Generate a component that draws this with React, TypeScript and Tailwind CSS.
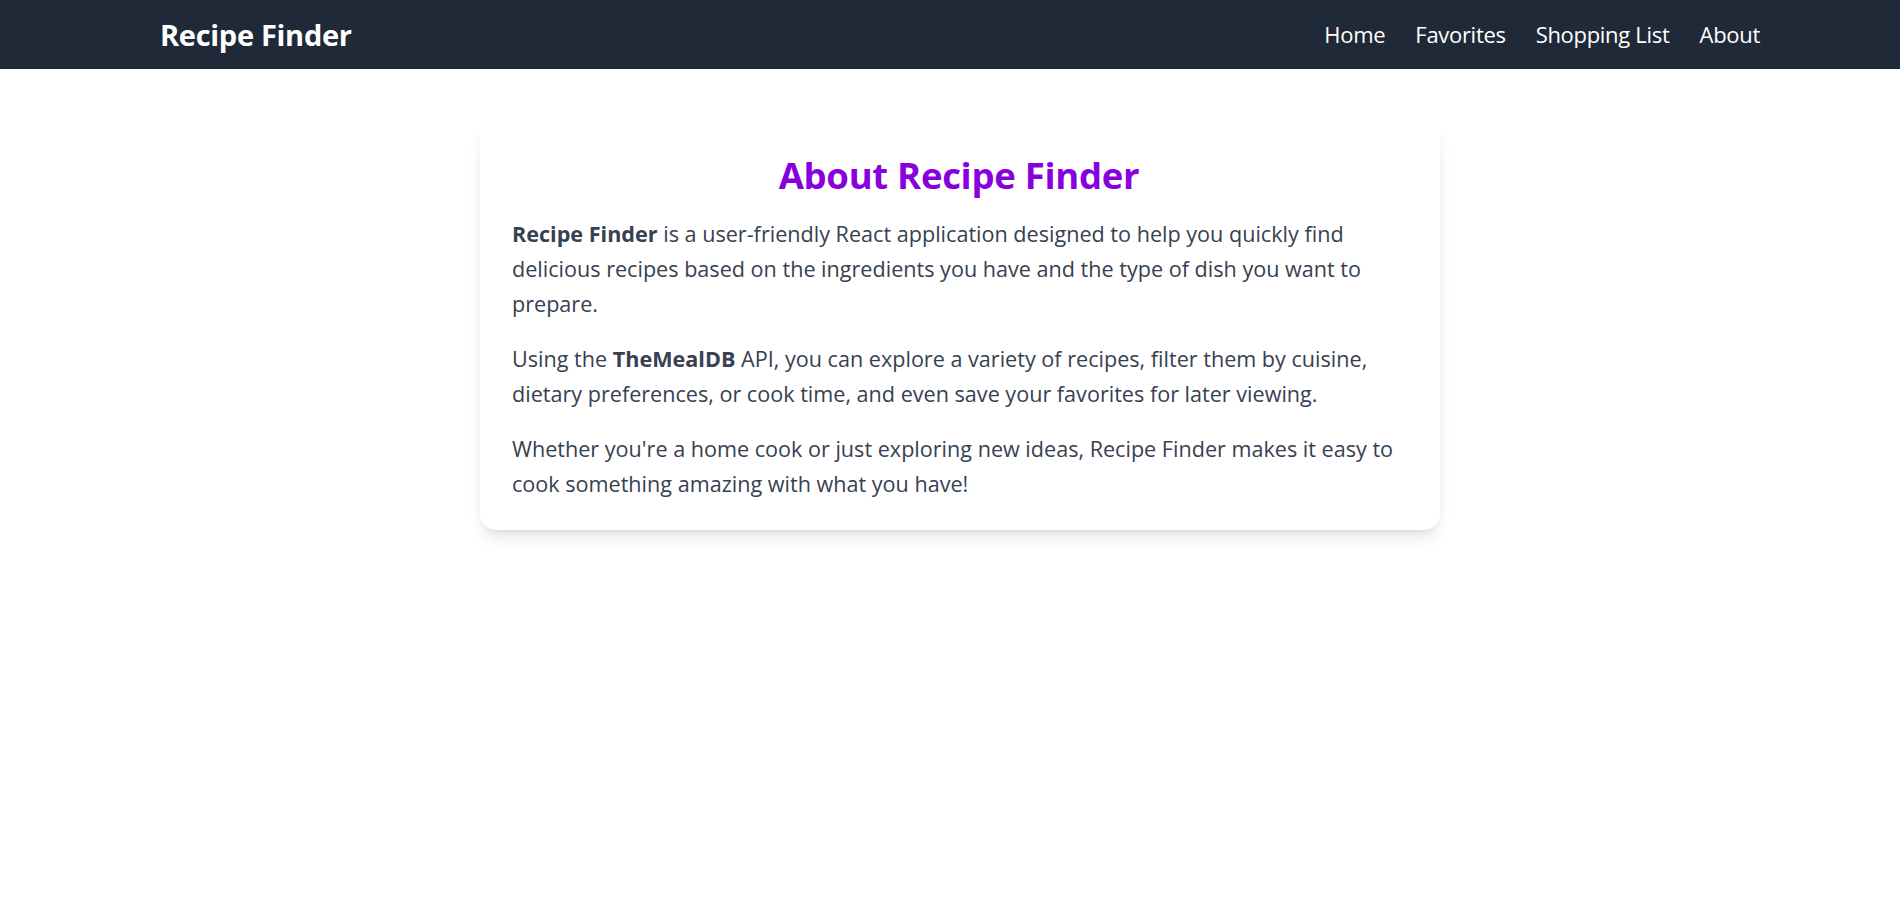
import React from "react";

export default function App() {
  const links = ["Home", "Favorites", "Shopping List", "About"];
  return (
    <div className="w-full min-h-screen overflow-x-hidden bg-white" style={{ fontFamily: '"Open Sans", "Noto Sans", sans-serif' }}>
      <div className="w-[1920px]">
        <nav className="h-[69px] bg-[#1f2937] px-[160px] flex items-center justify-between">
          <a className="text-[29px] font-bold text-white leading-none tracking-[-0.3px] -mt-px">Recipe Finder</a>
          <ul className="flex items-center gap-[30px] -mt-px">
            {links.map((l) => (
              <li key={l} className="text-[22px] text-white leading-none tracking-[-0.3px]">
                {l}
              </li>
            ))}
          </ul>
        </nav>
        <main className="pt-[51px] pb-10">
          <div className="mx-auto w-[960px] bg-white rounded-2xl shadow-lg pt-[34px] pb-[29px] pl-8 pr-[34px] text-[#374151]">
            <h1 className="text-center text-[36.5px] font-bold leading-[42px] text-[#8800dd] mb-5 tracking-[-0.3px]">
              About Recipe Finder
            </h1>
            <p className="text-[21.6px] leading-[35px] mb-5">
              <strong className="font-bold">Recipe Finder</strong> is a user-friendly React application designed to help you quickly find delicious recipes based on the ingredients you have and the type of dish you want to prepare.
            </p>
            <p className="text-[21.6px] leading-[35px] mb-5">
              Using the <strong className="font-bold">TheMealDB</strong> API, you can explore a variety of recipes, filter them by cuisine, dietary preferences, or cook time, and even save your favorites for later viewing.
            </p>
            <p className="text-[21.6px] leading-[35px]">
              Whether you're a home cook or just exploring new ideas, Recipe Finder makes it easy to cook something amazing with what you have!
            </p>
          </div>
        </main>
      </div>
    </div>
  );
}
